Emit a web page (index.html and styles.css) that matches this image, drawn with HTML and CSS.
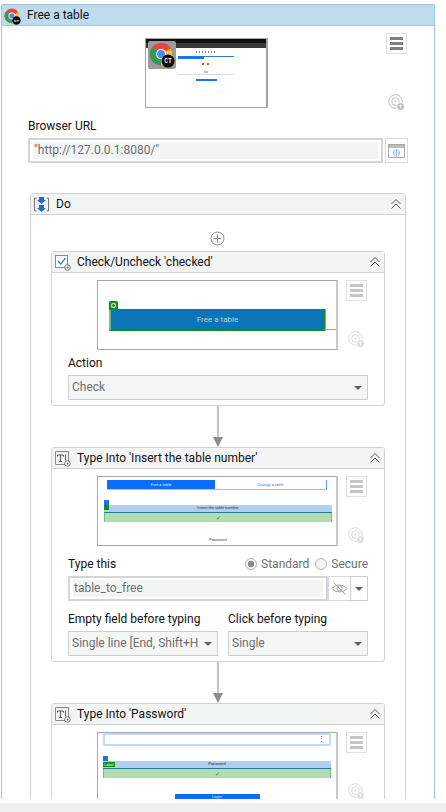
FILE: index.html
```html
<!DOCTYPE html>
<html>
<head>
  <title>Free a table</title>
  <link rel="stylesheet" href="styles.css">
</head>
<body>
  <svg class="defs" width="0" height="0">
    <symbol id="chrome" viewBox="0 0 28 28" overflow="visible">
      <circle cx="13" cy="13" r="12" fill="#e8453c"/>
      <path d="M13 13 L2.6 19 A12 12 0 0 0 13 25 Z" fill="#2f9e4f"/>
      <path d="M13 13 L2.6 19 A12 12 0 0 1 2.6 7 L7 7 Z" fill="#2f9e4f"/>
      <path d="M13 13 L23.4 7 A12 12 0 0 1 13 25 Z" fill="#fbc02d"/>
      <circle cx="13" cy="13" r="5.6" fill="#fff"/>
      <circle cx="13" cy="13" r="4.3" fill="#4a8af4"/>
      <circle cx="20.5" cy="20.5" r="7" fill="#0c0c0c"/>
      <text x="20.5" y="23" text-anchor="middle" font-size="7" font-family="Liberation Mono, monospace" font-weight="bold" fill="#e8e8e8">CT</text>
    </symbol>
    <symbol id="menu" viewBox="0 0 19 19">
      <rect x="3" y="3" width="13" height="3" fill="currentColor"/>
      <rect x="3" y="8" width="13" height="3" fill="currentColor"/>
      <rect x="3" y="13" width="13" height="3" fill="currentColor"/>
    </symbol>
    <symbol id="target" viewBox="0 0 17 17">
      <circle cx="7.5" cy="7.5" r="6.8" fill="none" stroke="currentColor" stroke-width="1"/>
      <circle cx="7.5" cy="7.5" r="3.8" fill="none" stroke="currentColor" stroke-width="1"/>
      <circle cx="7.5" cy="7.5" r="1" fill="currentColor"/>
      <circle cx="12.5" cy="12.5" r="4" fill="currentColor" stroke="#fff" stroke-width="1"/>
      <path d="M12.5 10.5 V14.5 M10.8 11.8 L14.2 11.8" stroke="#fff" stroke-width=".7"/>
    </symbol>
    <symbol id="collapse" viewBox="0 0 12 12">
      <path d="M1.5 6 L6 1.5 L10.5 6 M1.5 10.5 L6 6 L10.5 10.5" fill="none" stroke="#4d5666" stroke-width="1"/>
    </symbol>
    <symbol id="badge" viewBox="0 0 7 7">
      <circle cx="3.5" cy="3.5" r="2.8" fill="#fff" stroke="#6f6f6f" stroke-width="1"/>
      <circle cx="3.5" cy="3.5" r="1" fill="#6f6f6f"/>
    </symbol>
    <symbol id="typeinto" viewBox="0 0 17 17">
      <path d="M14 1.5 H1.5 V14.5 H11" fill="none" stroke="#8a8a8a" stroke-width="1"/>
      <path d="M14.5 1 V11" stroke="#8a8a8a" stroke-width="1"/>
      <path d="M3.5 6.5 V5 H9.5 V6.5 M6.5 5 V11.5 M5 11.5 H8" fill="none" stroke="#5c5c5c" stroke-width="1"/>
      <path d="M11.5 4.5 V10.5" stroke="#5c5c5c" stroke-width="1"/>
      <use href="#badge" x="10" y="10" width="7" height="7"/>
    </symbol>
  </svg>

  <div class="page">
    <div class="window">
      <div class="title">
        <svg class="title-icon"><use href="#chrome"/></svg>
        <span>Free a table</span>
      </div>

      <div class="browser-preview">
        <div class="thumb thumb-browser">
          <div class="browser-top"></div>
          <div class="browser-tabs"></div>
          <div class="browser-page">
            <div class="dots"></div>
            <div class="tabs-line"><span></span></div>
            <div class="dots short"></div>
            <div class="dots tiny"></div>
            <div class="rule"></div>
            <div class="blue-btn"></div>
          </div>
          <div class="thumb-logo"><svg><use href="#chrome"/></svg></div>
        </div>
        <div class="side">
          <div class="menu-btn dark"><svg><use href="#menu"/></svg></div>
          <svg class="target dark"><use href="#target"/></svg>
        </div>
      </div>

      <div class="url-block">
        <div class="label">Browser URL</div>
        <div class="url-row">
          <div class="input url-input"><div class="fill">"http://127.0.0.1:8080/"</div></div>
          <div class="url-btn">
            <svg width="17" height="14" viewBox="0 0 17 14">
              <rect x=".5" y=".5" width="16" height="13" fill="#fff" stroke="#a9a9a9"/>
              <rect x="1" y="1" width="15" height="3" fill="#bdbdbd"/>
              <circle cx="8.5" cy="9" r="3.2" fill="none" stroke="#8db8ee" stroke-width=".8"/>
              <path d="M5.3 9 H11.7 M8.5 5.8 V12.2" stroke="#8db8ee" stroke-width=".8"/>
            </svg>
          </div>
        </div>
      </div>

      <div class="box do-box">
        <div class="box-head">
          <svg class="head-icon" viewBox="0 0 17 17">
            <path d="M3.5 2 H1.5 V15 H3.5 M13.5 2 H15.5 V15 H13.5" fill="none" stroke="#777" stroke-width="1"/>
            <path d="M6 1 H11 V4 H13 L8.5 8 L4 4 H6 Z M6 9 H11 V12 H13 L8.5 16 L4 12 H6 Z" fill="#1f6fc4"/>
          </svg>
          <span class="head-title">Do</span>
          <svg class="chevron"><use href="#collapse"/></svg>
        </div>
        <div class="do-body">
          <svg class="plus" viewBox="0 0 15 15">
            <circle cx="7.5" cy="7.5" r="6.5" fill="none" stroke="#8f8f8f" stroke-width="1"/>
            <path d="M7.5 3.5 V11.5 M3.5 7.5 H11.5" stroke="#8f8f8f" stroke-width="1"/>
          </svg>

          <div class="box activity">
            <div class="box-head">
              <svg class="head-icon" viewBox="0 0 17 17">
                <rect x="1.5" y="1.5" width="12" height="12" fill="#fff" stroke="#8a8a8a"/>
                <path d="M4 7 L6.8 10 L11.5 4" fill="none" stroke="#2f7fd6" stroke-width="1.3"/>
                <use href="#badge" x="10" y="10" width="7" height="7"/>
              </svg>
              <span class="head-title">Check/Uncheck 'checked'</span>
              <svg class="chevron"><use href="#collapse"/></svg>
            </div>
            <div class="activity-body">
              <div class="preview">
                <div class="thumb thumb-check">
                  <div class="check-target">
                    <span class="green-tag"></span>
                    Free a table
                    <span class="check-line"></span>
                  </div>
                </div>
                <div class="side">
                  <div class="menu-btn"><svg><use href="#menu"/></svg></div>
                  <svg class="target"><use href="#target"/></svg>
                </div>
              </div>
              <div class="label field-label">Action</div>
              <div class="select">Check<i class="caret"></i></div>
            </div>
          </div>

          <div class="arrow"><i></i><b></b></div>

          <div class="box activity">
            <div class="box-head">
              <svg class="head-icon"><use href="#typeinto"/></svg>
              <span class="head-title">Type Into 'Insert the table number'</span>
              <svg class="chevron"><use href="#collapse"/></svg>
            </div>
            <div class="activity-body">
              <div class="preview">
                <div class="thumb thumb-type">
                  <div class="tab-strip">
                    <span class="tab-on">Free a table</span>
                    <span class="tab-off">Occupy a table</span>
                  </div>
                  <div class="tags"><i class="tag-blue"></i><i class="tag-green"></i></div>
                  <div class="hit-bar">Insert the table number</div>
                  <div class="hit-green">&#10003;</div>
                  <div class="tiny-foot">Password</div>
                </div>
                <div class="side">
                  <div class="menu-btn"><svg><use href="#menu"/></svg></div>
                  <svg class="target"><use href="#target"/></svg>
                </div>
              </div>
              <div class="type-head">
                <div class="label">Type this</div>
                <div class="radios">
                  <i class="radio on"></i><span>Standard</span>
                  <i class="radio"></i><span>Secure</span>
                </div>
              </div>
              <div class="type-row">
                <div class="input type-input"><div class="fill">table_to_free</div></div>
                <div class="eye-btn">
                  <svg width="17" height="15" viewBox="0 0 17 15">
                    <path d="M1 7.5 C4 3 13 3 16 7.5 C13 12 4 12 1 7.5 Z" fill="none" stroke="#a5a5a5" stroke-width="1"/>
                    <circle cx="8.5" cy="7.5" r="2.6" fill="none" stroke="#a5a5a5" stroke-width="1"/>
                    <path d="M2.5 1.5 L14.5 13.5" stroke="#a5a5a5" stroke-width="1"/>
                  </svg>
                </div>
                <div class="drop-btn"><i class="caret"></i></div>
              </div>
              <div class="two-cols">
                <div class="col-left">
                  <div class="label">Empty field before typing</div>
                  <div class="select">Single line [End, Shift+H<i class="caret"></i></div>
                </div>
                <div class="col-right">
                  <div class="label">Click before typing</div>
                  <div class="select">Single<i class="caret"></i></div>
                </div>
              </div>
            </div>
          </div>

          <div class="arrow"><i></i><b></b></div>

          <div class="box activity">
            <div class="box-head">
              <svg class="head-icon"><use href="#typeinto"/></svg>
              <span class="head-title">Type Into 'Password'</span>
              <svg class="chevron"><use href="#collapse"/></svg>
            </div>
            <div class="activity-body">
              <div class="preview">
                <div class="thumb thumb-pass">
                  <div class="pass-input">&#8942;</div>
                  <div class="tags"><i class="tag-blue"></i></div>
                  <div class="hit-bar">Password<span class="tag-wide">Label</span></div>
                  <div class="hit-green">&#10003;</div>
                  <div class="pass-btn">Login</div>
                </div>
                <div class="side">
                  <div class="menu-btn"><svg><use href="#menu"/></svg></div>
                  <svg class="target"><use href="#target"/></svg>
                </div>
              </div>
            </div>
          </div>
        </div>
      </div>
    </div>
  </div>
  <div class="statusbar"></div>
</body>
</html>
```

FILE: styles.css
```css
* {
  box-sizing: border-box;
}

html, body {
  margin: 0;
  height: 812px;
  overflow: hidden;
}

body {
  background: #fff;
  font-family: Roboto, "Noto Sans", sans-serif;
  font-size: 12px;
  color: #111;
  display: flex;
  flex-direction: column;
}

.defs {
  position: absolute;
}

.page {
  height: 803px;
  padding: 4px 11px 4px 1px;
  flex: none;
}

.statusbar {
  flex: 1;
  background: #f0f0f0;
}

.window {
  height: 795px;
  overflow: hidden;
  border: 1px solid #9fc8e5;
  border-bottom: 0;
  border-radius: 2px 2px 0 0;
}

.title {
  height: 21px;
  background: #bfdbee;
  border-bottom: 1px solid #9fc8e5;
  display: flex;
  align-items: center;
  padding-left: 2px;
}

.title-icon {
  width: 17px;
  height: 17px;
  margin-right: 6px;
  margin-top: 2px;
  overflow: visible;
}

/* top preview */
.browser-preview {
  display: flex;
  padding-left: 143px;
  margin-top: 7px;
}

.thumb {
  flex: none;
  background: #fff;
  border: 1px solid #aaa;
  border-right: 2px solid #c8c8c8;
  border-bottom: 1px solid #a8a8a8;
  overflow: hidden;
  position: relative;
}

.thumb-browser {
  width: 123px;
  height: 70px;
  margin-top: 5px;
  border-color: #a5a5a5;
  border-width: 1px 2px 1px 1px;
}

.browser-top {
  height: 4px;
  background: #111;
}

.browser-tabs {
  height: 5px;
  background: #3a3a3a;
}

.browser-page {
  padding: 3px 32px 0;
}

.dots {
  height: 2px;
  width: 20px;
  margin: 0 auto 3px;
  background: repeating-linear-gradient(90deg, #77808c 0 1px, #fff 1px 3px);
}

.dots.short {
  width: 8px;
  margin-top: 4px;
  margin-bottom: 0;
  background: repeating-linear-gradient(90deg, #a86b2c 0 2px, #fff 2px 5px);
}

.dots.tiny {
  width: 4px;
  margin-top: 6px;
  margin-bottom: 1px;
  background: #c4bcae;
}

.tabs-line {
  height: 3px;
  border-top: 1px solid #2b78e4;
}

.tabs-line span {
  display: block;
  width: 26px;
  height: 3px;
  margin-top: -1px;
  background: #1a73e8;
}

.rule {
  height: 1px;
  background: #dcdcdc;
}

.blue-btn {
  width: 21px;
  height: 2px;
  margin: 4px auto 0;
  background: #1a73e8;
}

.thumb-logo {
  position: absolute;
  left: 2px;
  top: 2px;
  width: 28px;
  height: 28px;
  background: #9b9b9b;
  border-radius: 2px;
  padding: 1px;
}

.thumb-logo svg {
  display: block;
  width: 26px;
  height: 26px;
}

.side {
  flex: none;
  width: 21px;
  display: flex;
  flex-direction: column;
  align-items: center;
  gap: 30px;
  color: #c4c6c8;
}

.browser-preview .side {
  margin-left: 118px;
  gap: 40px;
}

.menu-btn {
  width: 21px;
  height: 21px;
  border: 1px solid #dfe1e8;
}

.menu-btn svg {
  display: block;
  width: 19px;
  height: 19px;
}

.menu-btn.dark {
  color: #7f7f7f;
}

.target {
  width: 17px;
  height: 17px;
  color: #dcdcdc;
}

.target.dark {
  color: #bdbdbd;
}

/* url */
.url-block {
  padding-left: 26px;
  margin-top: 7px;
}

.label {
  line-height: 16px;
  height: 16px;
  white-space: nowrap;
}

.url-row {
  display: flex;
  margin-top: 4px;
}

.input {
  height: 25px;
  border: 2px solid #d3d5d6;
  background: #fff;
  padding: 2px 3px;
}

.fill {
  height: 17px;
  line-height: 16px;
  background: #f3f5f5;
  color: #6f6f6f;
  padding-left: 1px;
  white-space: nowrap;
}

.url-input {
  width: 355px;
}

.url-btn {
  width: 23px;
  height: 25px;
  margin-left: 2px;
  border: 1px solid #d6d9e6;
  display: flex;
  align-items: center;
  justify-content: center;
}

/* sequence boxes */
.box {
  border: 1px solid #d0d3d5;
  border-radius: 3px;
  background: #fff;
}

.do-box {
  width: 376px;
  margin-left: 28px;
  margin-top: 30px;
}

.box-head {
  height: 21px;
  background: #f3f5f5;
  border-bottom: 1px solid #d0d3d5;
  display: flex;
  align-items: center;
  padding: 0 3px 0 2px;
}

.head-icon {
  width: 17px;
  height: 17px;
  flex: none;
  margin-right: 6px;
}

.head-title {
  flex: 1;
  white-space: nowrap;
}

.chevron {
  width: 12px;
  height: 12px;
  flex: none;
}

.do-body {
  padding: 16px 20px 0;
  display: flex;
  flex-direction: column;
}

.plus {
  width: 15px;
  height: 15px;
  align-self: center;
  flex: none;
  margin-bottom: 5px;
  margin-left: -2px;
}

.activity {
  width: 334px;
  flex: none;
}

.activity-body {
  padding: 7px 16px 5px;
}

.preview {
  display: flex;
  padding-left: 29px;
}

.preview .side {
  margin-left: 8px;
}

.preview .thumb {
  width: 241px;
  height: 70px;
}

.field-label {
  margin-top: 5px;
}

.select {
  height: 25px;
  margin-top: 4px;
  border: 1px solid #ccced0;
  background: #f4f5f5;
  color: #6f6f6f;
  line-height: 23px;
  padding: 0 3px;
  position: relative;
  white-space: nowrap;
}

.caret {
  display: block;
  width: 0;
  height: 0;
  border-left: 4px solid transparent;
  border-right: 4px solid transparent;
  border-top: 4px solid #606060;
}

.select .caret {
  position: absolute;
  right: 5px;
  top: 10px;
}

.arrow {
  height: 41px;
  width: 334px;
  flex: none;
  display: flex;
  flex-direction: column;
  align-items: center;
}

.arrow i {
  width: 2px;
  flex: 1;
  background: #c3c3c3;
}

.arrow b {
  width: 0;
  height: 0;
  border-left: 5px solid transparent;
  border-right: 5px solid transparent;
  border-top: 10px solid #8c8c8c;
}

/* check thumb */
.thumb-check {
  padding: 28px 12px 0 11px;
}

.check-target {
  height: 22px;
  width: 216px;
  background: #0b75b5;
  border: 1px solid #0b8f18;
  border-left: 2px solid #6fc27a;
  color: #b9d3e2;
  font-size: 8px;
  line-height: 20px;
  text-align: center;
  position: relative;
  box-shadow: 1px 0 0 #6fc27a;
}

.green-tag {
  position: absolute;
  left: -2px;
  top: -9px;
  width: 9px;
  height: 9px;
  background: radial-gradient(circle, #0b8f18 0 1px, #b9e0bd 1.5px 2.5px, #0b8f18 3px);
  border-radius: 2px 2px 0 0;
}

.check-line {
  position: absolute;
  left: 100%;
  top: 19px;
  width: 12px;
  height: 1px;
  background: #7ea9e6;
}

/* type thumb */
.thumb-type {
  padding: 3px 4px 0 6px;
  font-size: 4px;
  line-height: 1;
}

.tab-strip {
  display: flex;
  height: 10px;
  margin-left: 3px;
  margin-right: 5px;
  border-right: 1px solid #5b9bf0;
  border-bottom: 1px solid #9cc0f5;
}

.tab-on, .tab-off {
  flex: none;
  line-height: 9px;
  text-align: center;
}

.tab-on {
  width: 108px;
  background: #0d6efd;
  color: #dbe8ff;
}

.tab-off {
  flex: 1;
  color: #3b7fe0;
}

.tags {
  display: flex;
  flex-direction: column;
  margin-top: 10px;
  position: relative;
  z-index: 1;
}

.tag-blue, .tag-green {
  display: block;
  width: 5px;
  height: 5px;
}

.tag-blue {
  background: #1a73e8;
}

.tag-green {
  background: #0b8f18;
}

.thumb-type .tags {
  margin-bottom: -5px;
}

.hit-bar {
  height: 8px;
  background: #b1cdf0;
  border-bottom: 1px solid #1c7f95;
  text-align: center;
  line-height: 6px;
  color: #333;
  position: relative;
}

.hit-green {
  height: 9px;
  background: #b4dcb4;
  border-left: 1px solid #6fc27a;
  border-right: 1px solid #6fc27a;
  text-align: center;
  line-height: 9px;
  color: #0b8f18;
  font-size: 6px;
}

.tiny-foot {
  margin-top: 16px;
  text-align: center;
  color: #444;
}

/* password thumb */
.thumb-pass {
  padding: 0 5px;
  font-size: 4px;
  line-height: 1;
}

.pass-input {
  height: 13px;
  border: 2px solid #c4d8fa;
  border-radius: 2px;
  text-align: right;
  font-size: 7px;
  line-height: 9px;
  padding-right: 4px;
  color: #444;
}

.thumb-pass .tags {
  margin-top: 10px;
}

.tag-wide {
  position: absolute;
  left: 0;
  top: 1px;
  width: 12px;
  height: 5px;
  background: #0b8f18;
  color: #dff;
  line-height: 5px;
}

.pass-btn {
  width: 85px;
  height: 14px;
  margin: 16px auto 0;
  background: #0d6efd;
  color: #dbe8ff;
  text-align: center;
  line-height: 5px;
}

/* type into fields */
.type-head {
  display: flex;
  justify-content: space-between;
  align-items: center;
  margin-top: 10px;
}

.radios {
  display: flex;
  align-items: center;
  color: #6f6f6f;
}

.radio {
  width: 12px;
  height: 12px;
  border: 1px solid #b5b5b5;
  border-radius: 50%;
  background: #f4f4f4;
  margin-right: 4px;
  margin-left: 6px;
}

.radio.on {
  background: radial-gradient(circle, #8a8a8a 0 3px, #f4f4f4 3.5px);
}

.type-row {
  display: flex;
  margin-top: 4px;
}

.type-input {
  width: 260px;
}

.eye-btn {
  width: 22px;
  height: 25px;
  border: 1px solid #d6d9e0;
  border-right: 0;
  display: flex;
  align-items: center;
  justify-content: center;
}

.drop-btn {
  width: 18px;
  height: 25px;
  border: 1px solid #ccced0;
  display: flex;
  align-items: center;
  justify-content: center;
}

.two-cols {
  display: flex;
  gap: 10px;
  margin-top: 10px;
}

.col-left {
  width: 150px;
}

.col-right {
  width: 140px;
}
```
